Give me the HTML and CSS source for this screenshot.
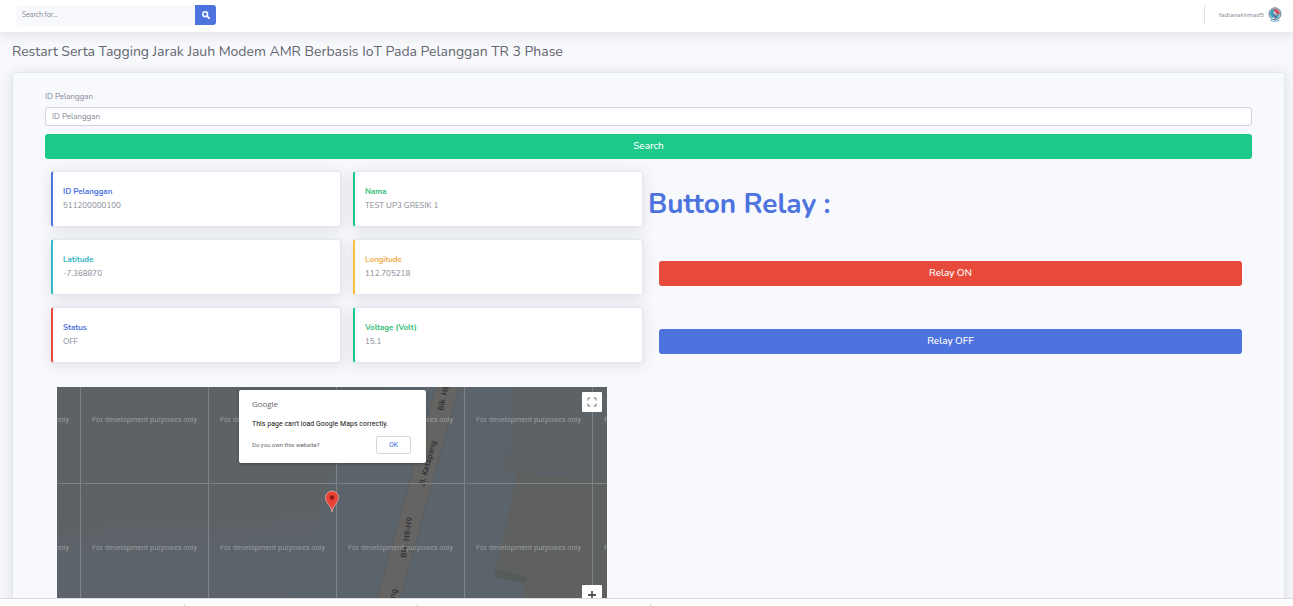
FILE: index.html
```html
<!DOCTYPE html>
<html lang="id">
<head>
<meta charset="utf-8">
<title>Restart Serta Tagging Jarak Jauh Modem AMR</title>
<link rel="stylesheet" href="styles.css">
</head>
<body>
<div class="page">
  <header class="topbar">
    <div class="search">
      <div class="search-input"><span class="t-search">Search for...</span></div>
      <div class="search-btn"><svg width="8" height="8" viewBox="0 0 8 8"><circle cx="3.2" cy="3.2" r="2.4" fill="none" stroke="#fff" stroke-width="1.5"/><path d="M5 5L7.3 7.3" stroke="#fff" stroke-width="1.700" stroke-linecap="round"/></svg></div>
    </div>
    <div class="user">
      <span class="username">fadlanakhmad5</span>
      <svg width="14" height="16" viewBox="0 0 14 16"><circle cx="7" cy="6.8" r="6" fill="#c5dce5" stroke="#637f94"/><path d="M2 7Q2 2 7 2L5 6L7 9L4 11Z" fill="#36a4be"/><path d="M5 2Q10 1 12 6L10 9L6 4Z" fill="#cf5468"/><path d="M4 5L10 10L7 12Z" fill="#586c97"/><path d="M8 8L12 7L9 12Z" fill="#43a7be"/><path d="M2.5 13Q7 15.5 11.5 13" fill="none" stroke="#69a6c8" stroke-width="1.3" stroke-dasharray="1.5 .5"/></svg>
    </div>
  </header>
  <main class="content">
    <h1 class="title"><span>Restart Serta Tagging Jarak Jauh Modem AMR Berbasis IoT Pada Pelanggan TR 3 Phase</span></h1>
    <section class="panel">
      <div class="label">ID Pelanggan</div>
      <div class="field">ID Pelanggan</div>
      <div class="btn green search-wide">Search</div>
      <div class="columns">
        <div class="cards">
          <div class="card b-blue"><div class="name blue">ID Pelanggan</div><div class="value">511200000100</div></div>
          <div class="card b-green"><div class="name c-green">Nama</div><div class="value caps">TEST UP3 GRESIK 1</div></div>
          <div class="card b-teal"><div class="name c-teal">Latitude</div><div class="value">-7.368870</div></div>
          <div class="card b-yellow"><div class="name c-yellow">Longitude</div><div class="value">112.705218</div></div>
          <div class="card b-red"><div class="name blue">Status</div><div class="value caps">OFF</div></div>
          <div class="card b-green"><div class="name c-green">Voltage (Volt)</div><div class="value">15.1</div></div>
        </div>
        <div class="relay">
          <h2 class="relay-title">Button Relay :</h2>
          <div class="btn red">Relay ON</div>
          <div class="btn primary">Relay OFF</div>
        </div>
      </div>
      <div class="map">
        <svg class="map-canvas" width="550" height="212" viewBox="0 0 550 212">
          <defs><linearGradient id="land" x1="0" y1="0" x2=".12" y2="1"><stop offset=".6" stop-color="#5d6265"/><stop offset=".85" stop-color="#5c636b"/></linearGradient></defs>
          <rect width="550" height="212" fill="url(#land)"/>
          <path d="M279 80L330 0H550V212H230L255 160Z" fill="#5b636b"/>
          <path d="M456 0H550V100L447 85Z" fill="#5d6266"/>
          <path d="M460 86L550 94V212H465L468 196L437 190L438 182L451 130Z" fill="#5f6060"/>
          <path d="M438 182L469 190L467 196L437 190Z" fill="#555a5b"/>
          <path d="M51 5L18 130" stroke="#595f62" stroke-width="1"/>
          <path d="M379 0H402L343 212H320Z" fill="#656463" stroke="#575d61"/>
          <g class="road">
            <text transform="translate(386 24) rotate(-77)" textLength="39">Blk. H8-H9</text>
            <text transform="translate(367 100) rotate(-75)" textLength="47">Jl. Ketapang</text>
            <text transform="translate(349 171) rotate(-81)" textLength="41">Blk. H8-H9</text>
            <text transform="translate(328 248) rotate(-75)" textLength="47">Jl. Ketapang</text>
          </g>
          <path d="M23.5 0V212M151.5 0V212M279.5 0V212M407.5 0V212M535.5 0V212M0 96.500H550" stroke="#7e8285" fill="none"/>
          <g class="dev">
            <text x="-93" y="35" textLength="105">For development purposes only</text>
            <text x="35" y="35" textLength="105">For development purposes only</text>
            <text x="163" y="35" textLength="105">For development purposes only</text>
            <text x="291" y="35" textLength="105">For development purposes only</text>
            <text x="419" y="35" textLength="105">For development purposes only</text>
            <text x="547" y="35" textLength="105">For development purposes only</text>
            <text x="-93" y="163" textLength="105">For development purposes only</text>
            <text x="35" y="163" textLength="105">For development purposes only</text>
            <text x="163" y="163" textLength="105">For development purposes only</text>
            <text x="291" y="163" textLength="105">For development purposes only</text>
            <text x="419" y="163" textLength="105">For development purposes only</text>
            <text x="547" y="163" textLength="105">For development purposes only</text>
          </g>
          <path d="M275 125C274.500 119 268.500 116 268.500 110.500A6.500 6.500 0 0 1 281.500 110.500C281.500 116 275.500 119 275 125Z" fill="#ea4335" stroke="#e5b1ac" stroke-width=".8"/>
          <circle cx="275" cy="110.500" r="2.200" fill="#8d1710"/>
        </svg>
        <div class="dialog">
          <div class="google">Google</div>
          <div class="message">This page can't load Google Maps correctly.</div>
          <div class="dialog-row"><span class="own">Do you own this website?</span><span class="ok">OK</span></div>
        </div>
        <div class="map-btn full"><svg width="10" height="10" viewBox="0 0 10 10"><path d="M1 3.500V1H3.500M6.500 1H9V3.500M9 6.500V9H6.500M3.500 9H1V6.500" fill="none" stroke="#777" stroke-width="1"/></svg></div>
        <div class="map-btn plus"><svg width="10" height="10" viewBox="0 0 10 10"><path d="M1 5H9M5 1V9" stroke="#555" stroke-width="1.800"/></svg></div>
      </div>
    </section>
  </main>
  <footer class="bottom"><i></i><i></i><i></i></footer>
</div>
</body>
</html>
```
FILE: styles.css
```css
* { box-sizing: border-box; }
body { margin: 0; background: #f8f9fc; font-family: Nunito, "Open Sans", "Noto Sans", sans-serif; color: #858796; }
.page { height: 606px; display: flex; flex-direction: column; overflow: hidden; }
.topbar { flex: none; height: 32px; background: #fff; display: flex; justify-content: space-between; padding: 5px 11px 7px 16px; box-shadow: 0 2px 14px rgba(58, 59, 69, .15); }
.search { display: flex; height: 20px; }
.search-input { width: 179px; background: #f8f9fc; padding-left: 6px; font-size: 7px; line-height: 19px; border-radius: 3px 0 0 3px; letter-spacing: -.1px; }
.search-btn { width: 21px; background: #4e73df; border-radius: 0 3px 3px 0; display: flex; align-items: center; justify-content: center; }
.user { display: flex; align-items: center; height: 19px; border-left: 1px solid #dddfe8; padding-left: 14px; gap: 4px; }
.username { width: 45px; font-size: 6.5px; letter-spacing: -.06px; white-space: nowrap; line-height: 17px; }
.content { flex: 1; min-height: 0; overflow: hidden; padding: 10px 8px 0 12px; }
.title { margin: 0; height: 20px; font-size: 14px; line-height: 20px; font-weight: 400; color: #62646f; white-space: nowrap; letter-spacing: -.023px; }
.panel { margin-top: 10px; height: 560px; border: 1px solid #e3e6f0; border-radius: 3px; padding: 18px 32px 0; box-shadow: 0 2px 14px rgba(58, 59, 69, .15); }
.label { height: 12px; font-size: 8px; line-height: 12px; letter-spacing: -.05px; }
.field { margin-top: 4px; height: 19px; border: 1px solid #d1d3e2; border-radius: 3px; background: #fff; padding-left: 6px; font-size: 8px; line-height: 17px; letter-spacing: -.05px; }
.btn { height: 25px; border-radius: 3px; color: #fff; font-size: 10px; line-height: 24px; font-weight: 500; text-align: center; letter-spacing: -.04px; }
.green { background: #1cc88a; }
.search-wide { margin-top: 8px; }
.red { background: #e74a3b; }
.primary { background: #4e73df; }
.columns { display: flex; gap: 6px; padding: 12px 10px 0 6px; }
.cards { width: 592px; display: grid; grid-template-columns: 290px 290px; gap: 12px; }
.card { height: 56px; background: #fff; border: 1px solid #e3e6f0; border-left-width: 2px; border-radius: 3px; padding: 13px 0 0 10px; box-shadow: 0 2px 14px rgba(58, 59, 69, .15); }
.b-blue { border-left-color: #4e73df; }
.b-green { border-left-color: #1cc88a; }
.b-teal { border-left-color: #36b9cc; }
.b-yellow { border-left-color: #f6c23e; }
.b-red { border-left-color: #e74a3b; }
.name { font-size: 8px; line-height: 14px; font-weight: 700; letter-spacing: -.08px; }
.value { font-size: 8px; line-height: 14px; letter-spacing: .02px; }
.caps { letter-spacing: 0; }
.blue { color: #4e73df; }
.c-green { color: #37bd7a; }
.c-teal { color: #36b5bd; }
.c-yellow { color: #f0ae52; }
.relay { flex: 1; }
.relay-title { margin: 0 0 0 -1px; height: 90px; font-size: 28px; line-height: 66px; font-weight: 700; letter-spacing: -.08px; color: #4e73df; }
.relay .btn { margin: 0 0 43px 10px; }
.relay .btn:last-child { margin-bottom: 0; }
.map { position: relative; width: 550px; height: 212px; margin: 24px 0 0 12px; }
.map-canvas { display: block; overflow: hidden; }
.road { font: 500 8px Roboto, sans-serif; fill: #303336; }
.dev { font: 7.5px Roboto, sans-serif; fill: #989c9e; }
.dialog { position: absolute; left: 182px; top: 3px; width: 187px; height: 73px; background: #fff; border-radius: 2px; padding: 8px 15px 0 13px; font-family: Roboto, sans-serif; white-space: nowrap; box-shadow: 0 1px 3px rgba(0, 0, 0, .3); }
.google { font-family: "Open Sans", sans-serif; font-size: 8px; line-height: 12px; letter-spacing: -.08px; color: #666; }
.message { margin-top: 8px; font-size: 7px; line-height: 12px; color: #111; letter-spacing: .02px; }
.dialog-row { margin-top: 6px; display: flex; justify-content: space-between; align-items: center; }
.own { font-size: 6px; line-height: 10px; margin-bottom: 1px; color: #666; }
.ok { width: 35px; height: 18px; border: 1px solid #d6d8dc; border-radius: 2px; text-align: center; font-size: 7px; line-height: 16px; color: #3367d6; }
.map-btn { position: absolute; left: 525px; width: 20px; height: 20px; background: #fff; display: flex; align-items: center; justify-content: center; border-radius: 1px; }
.full { top: 5px; }
.plus { top: 198px; }
.bottom { flex: none; height: 8px; background: #fff; border-top: 1px solid #d7dade; display: flex; gap: 232px; padding: 5px 0 0 184px; }
.bottom i { width: 1px; height: 2px; background: #d4d5d8; }
```
